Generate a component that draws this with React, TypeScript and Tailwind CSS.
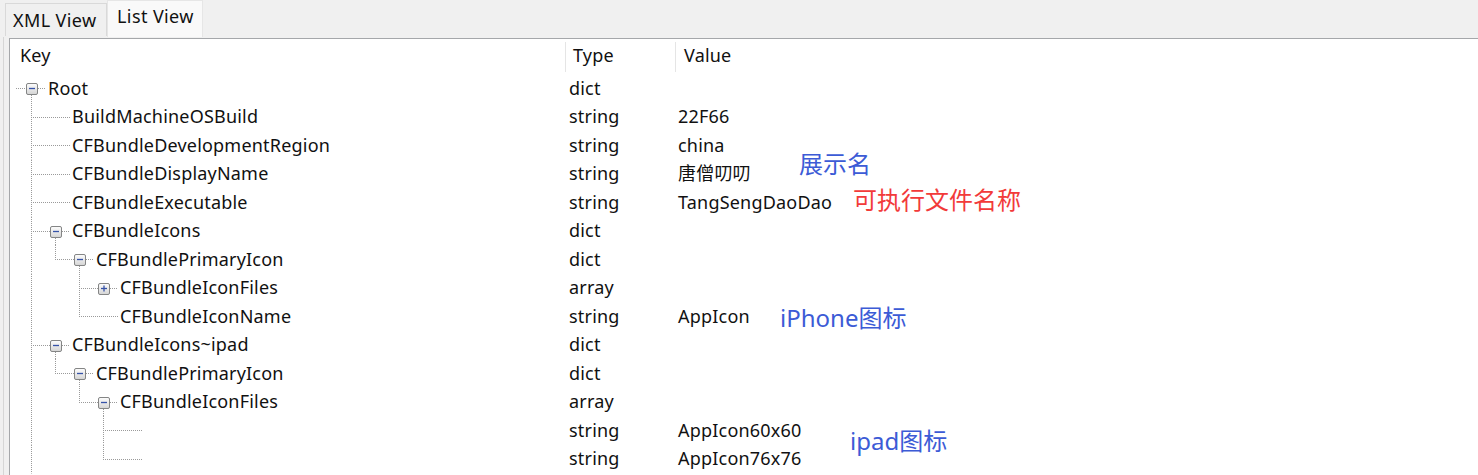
import React from "react";

type Row = {
  level: number;
  key: string;
  type: string;
  value: string;
  box?: "minus" | "plus";
  full: number[];
  half: number[];
  down?: boolean;
};

const rows: Row[] = [
  { level: 0, key: "Root", type: "dict", value: "", box: "minus", full: [], half: [], down: true },
  { level: 1, key: "BuildMachineOSBuild", type: "string", value: "22F66", full: [31], half: [] },
  { level: 1, key: "CFBundleDevelopmentRegion", type: "string", value: "china", full: [31], half: [] },
  { level: 1, key: "CFBundleDisplayName", type: "string", value: "唐僧叨叨", full: [31], half: [] },
  { level: 1, key: "CFBundleExecutable", type: "string", value: "TangSengDaoDao", full: [31], half: [] },
  { level: 1, key: "CFBundleIcons", type: "dict", value: "", box: "minus", full: [31], half: [], down: true },
  { level: 2, key: "CFBundlePrimaryIcon", type: "dict", value: "", box: "minus", full: [31], half: [55], down: true },
  { level: 3, key: "CFBundleIconFiles", type: "array", value: "", box: "plus", full: [31, 79], half: [] },
  { level: 3, key: "CFBundleIconName", type: "string", value: "AppIcon", full: [31], half: [79] },
  { level: 1, key: "CFBundleIcons~ipad", type: "dict", value: "", box: "minus", full: [31], half: [], down: true },
  { level: 2, key: "CFBundlePrimaryIcon", type: "dict", value: "", box: "minus", full: [31], half: [55], down: true },
  { level: 3, key: "CFBundleIconFiles", type: "array", value: "", box: "minus", full: [31], half: [79], down: true },
  { level: 4, key: "", type: "string", value: "AppIcon60x60", full: [31, 103], half: [] },
  { level: 4, key: "", type: "string", value: "AppIcon76x76", full: [31], half: [103] },
];

const OFF = 10;
const RH = 28.5;

function TreeLines({ r }: { r: Row }) {
  const mid = Math.floor(RH / 2);
  const L = r.level;
  const textX = 48 + 24 * L - OFF;
  const cx = 31 + 24 * L - OFF;
  const parentX = L === 0 ? 16 - OFF : 31 + 24 * (L - 1) - OFF;
  const stroke = "#9a9a9a";
  const dash = "1 1";
  const px = (x: number) => x + 0.5;
  const hy = mid + 0.5;
  return (
    <svg className="absolute left-0 top-0" width={200} height={RH} style={{ overflow: "visible" }}>
      {r.full.map((x) => (
        <line key={"f" + x} x1={px(x - OFF)} y1={0} x2={px(x - OFF)} y2={RH} stroke={stroke} strokeDasharray={dash} />
      ))}
      {r.half.map((x) => (
        <line key={"h" + x} x1={px(x - OFF)} y1={0} x2={px(x - OFF)} y2={mid} stroke={stroke} strokeDasharray={dash} />
      ))}
      {r.box ? (
        <>
          <line x1={parentX} y1={hy} x2={cx - 5} y2={hy} stroke={stroke} strokeDasharray={dash} />
          <line x1={cx + 7} y1={hy} x2={textX - 2} y2={hy} stroke={stroke} strokeDasharray={dash} />
          {r.down && (
            <line x1={px(cx)} y1={mid + 7} x2={px(cx)} y2={RH} stroke={stroke} strokeDasharray={dash} />
          )}
          <defs>
            <linearGradient id={"bx" + L} x1="0" y1="0" x2="0" y2="1">
              <stop offset="0" stopColor="#fdfdfd" />
              <stop offset="1" stopColor="#d4d4d4" />
            </linearGradient>
          </defs>
          <rect x={cx - 5 + 0.5} y={mid - 5 + 0.5} width={11} height={11} fill={"url(#bx" + L + ")"} stroke="#848585" rx={1.5} />
          <line x1={cx - 2} y1={hy} x2={cx + 4} y2={hy} stroke="#3653a8" strokeWidth={1.3} />
          {r.box === "plus" && (
            <line x1={px(cx) + 0.5} y1={mid - 2.5} x2={px(cx) + 0.5} y2={mid + 3.5} stroke="#3653a8" strokeWidth={1.3} />
          )}
        </>
      ) : (
        <line x1={parentX} y1={hy} x2={textX - 2} y2={hy} stroke={stroke} strokeDasharray={dash} />
      )}
    </svg>
  );
}

export default function App() {
  return (
    <div
      className="relative w-[1478px] h-[475px] overflow-hidden bg-[#f0f0f0] text-[#111111]"
      style={{ fontFamily: '"Noto Sans", "Noto Sans CJK SC", sans-serif' }}
    >
      {/* Tabs */}
      <div className="flex items-end h-[37px] pl-[5px] text-[18px] tracking-[0.4px]">
        <div className="h-[33px] w-[102px] mb-[1px] border border-[#d9d9d9] border-b-0 bg-[#f0f0f0] flex items-center pl-[7px] pt-[1px]">
          XML View
        </div>
        <div className="h-[37px] w-[96px] border border-[#e6e6e6] border-b-0 bg-[#f9f9f9] flex items-center pl-[9px] pb-[5px]">
          List View
        </div>
      </div>
      {/* Pane */}
      <div className="flex h-[438px] pl-[3px]">
        <div className="flex-1 border-l border-[#d6d6d6] pl-[5px] pt-[1px] bg-[#f0f0f0]">
          <div className="h-full border-l border-t border-[#a5a7aa] bg-white">
            {/* Header */}
            <div className="flex h-[35px] items-center text-[18px] tracking-[0.2px]">
              <div className="w-[555px] pl-[10px] pb-[3px]">Key</div>
              <div className="w-[110px] h-[30px] border-l border-[#e5e5e5] pl-[7px] flex items-center pb-[3px]">Type</div>
              <div className="flex-1 h-[30px] border-l border-[#e5e5e5] pl-[8px] flex items-center pb-[3px]">Value</div>
            </div>
            {/* Rows */}
            {rows.map((r, i) => (
              <div key={i} className="flex h-[28.5px] items-center text-[18px] tracking-[0.2px] leading-none">
                <div className="relative w-[555px] h-full flex items-center">
                  <TreeLines r={r} />
                  <span className="relative pb-[1px]" style={{ marginLeft: 48 + 24 * r.level - OFF }}>
                    {r.key}
                  </span>
                </div>
                <div className="w-[110px] pl-[4px] pb-[1px]">{r.type}</div>
                <div className="flex-1 pl-[3px] pb-[1px]">{r.value}</div>
              </div>
            ))}
          </div>
        </div>
      </div>
      {/* Annotations */}
      <div className="absolute left-[799px] top-[152px] text-[24px] text-[#3c5bd6] leading-none">展示名</div>
      <div className="absolute left-[853px] top-[188px] text-[24px] text-[#f23a3a] leading-none">可执行文件名称</div>
      <div className="absolute left-[780px] top-[306px] text-[24px] text-[#3c5bd6] leading-none">iPhone图标</div>
      <div className="absolute left-[850px] top-[429px] text-[24px] text-[#3c5bd6] leading-none">ipad图标</div>
    </div>
  );
}
